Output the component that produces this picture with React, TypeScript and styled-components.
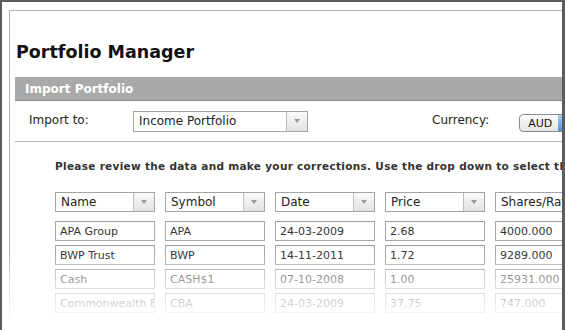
import React from "react";
import styled, { createGlobalStyle } from "styled-components";

const GlobalStyle = createGlobalStyle`
  html, body {
    margin: 0;
    padding: 0;
    background: #fff;
  }
  body {
    font-family: "DejaVu Sans", Verdana, sans-serif;
  }
`;

const Screen = styled.div`
  position: relative;
  width: 565px;
  height: 330px;
  overflow: hidden;
  box-sizing: border-box;
  border-top: 2px solid #5c5c5c;
  border-left: 2px solid #5c5c5c;
  border-right: 3px solid #5c5c5c;
  background: #fff;
`;

const Window = styled.div`
  margin: 8px 0 0 7px;
  height: 400px;
  border-top: 1px solid #b4b4b4;
  border-left: 1px solid #b4b4b4;
  padding-left: 5px;
  display: flex;
  flex-direction: column;
`;

const Title = styled.h1`
  margin: 30px 0 0 1px;
  font-size: 17.5px;
  line-height: 22px;
  font-weight: bold;
  color: #111;
`;

const SectionBar = styled.div`
  margin-top: 14px;
  height: 23px;
  background: #a9a9a9;
  border-bottom: 1px solid #8a8a8a;
  display: flex;
  align-items: center;
  padding-left: 10px;
  color: #fff;
  font-size: 12px;
  font-weight: bold;
`;

const ImportRow = styled.div`
  height: 40px;
  display: flex;
  align-items: center;
  border-bottom: 1px solid #b8b8b8;
  padding-left: 14px;
  font-size: 12px;
  color: #222;
`;

const Label = styled.span<{ $width?: number }>`
  width: ${({ $width }) => ($width ? `${$width}px` : "auto")};
  flex-shrink: 0;
  margin-top: -2px;
`;

const Select = styled.div<{ $width: number; $height: number; $size: number }>`
  display: flex;
  flex-shrink: 0;
  box-sizing: border-box;
  width: ${({ $width }) => $width}px;
  height: ${({ $height }) => $height}px;
  border: 1px solid #a4a4a4;
  background: #fff;
  font-size: ${({ $size }) => $size}px;
  color: #222;
`;

const SelectText = styled.div`
  flex: 1;
  display: flex;
  align-items: center;
  padding-left: 5px;
  white-space: nowrap;
  overflow: hidden;
`;

const SelectArrow = styled.div`
  width: 20px;
  flex-shrink: 0;
  border-left: 1px solid #bdbdbd;
  background: linear-gradient(#fafafa, #e2e2e2);
  display: flex;
  align-items: center;
  justify-content: center;

  &::after {
    content: "";
    border-left: 3px solid transparent;
    border-right: 3px solid transparent;
    border-top: 4px solid #9a9a9a;
  }
`;

const Currency = styled.div`
  margin-left: 124px;
  display: flex;
  align-items: center;
`;

const PopUp = styled.div`
  margin-left: 30px;
  margin-top: 4px;
  display: flex;
  height: 18px;
  box-sizing: border-box;
  border: 1px solid #8c8c8c;
  border-radius: 4px;
  background: linear-gradient(#fdfdfd, #e4e4e4);
  font-size: 11px;
  overflow: hidden;
  flex-shrink: 0;
`;

const PopUpText = styled.div`
  padding: 0 6px 0 8px;
  display: flex;
  align-items: center;
  color: #111;
`;

const PopUpArrow = styled.div`
  width: 14px;
  background: linear-gradient(#a9cdf5, #4f8fdc);
`;

const Review = styled.div`
  padding: 0 0 0 40px;
  display: flex;
  flex-direction: column;
`;

const Instructions = styled.p`
  margin: 18px 0 0;
  font-size: 10.5px;
  font-weight: bold;
  color: #333;
  white-space: nowrap;
  letter-spacing: 0.3px;
`;

const Grid = styled.div`
  margin-top: 20px;
  display: grid;
  grid-template-columns: repeat(5, 100px);
  column-gap: 10px;
  row-gap: 4px;
`;

const HeaderRow = styled.div`
  display: contents;

  & > div {
    margin-bottom: 5px;
  }
`;

const Cell = styled.div`
  box-sizing: border-box;
  height: 20px;
  border: 1px solid #a8a8a8;
  border-top-color: #9a9a9a;
  background: #fff;
  font-size: 11px;
  color: #333;
  padding-left: 4px;
  display: flex;
  align-items: center;
  white-space: nowrap;
  overflow: hidden;
`;

const Fade = styled.div`
  position: absolute;
  left: 0;
  right: 0;
  top: 252px;
  bottom: 0;
  background: linear-gradient(
    rgba(255, 255, 255, 0) 0px,
    rgba(255, 255, 255, 0.55) 28px,
    rgba(255, 255, 255, 0.8) 52px,
    #fff 70px
  );
  pointer-events: none;
`;

const headers = ["Name", "Symbol", "Date", "Price", "Shares/Rate"];

const rows = [
  ["APA Group", "APA", "24-03-2009", "2.68", "4000.000"],
  ["BWP Trust", "BWP", "14-11-2011", "1.72", "9289.000"],
  ["Cash", "CASH$1", "07-10-2008", "1.00", "25931.000"],
  ["Commonwealth Bank", "CBA", "24-03-2009", "37.75", "747.000"],
];

const App: React.FC = () => {
  return (
    <>
      <GlobalStyle />
      <Screen>
        <Window>
          <Title>Portfolio Manager</Title>
          <SectionBar>Import Portfolio</SectionBar>
          <ImportRow>
            <Label $width={104}>Import to:</Label>
            <Select $width={175} $height={21} $size={12}>
              <SelectText>Income Portfolio</SelectText>
              <SelectArrow />
            </Select>
            <Currency>
              <Label>Currency:</Label>
              <PopUp>
                <PopUpText>AUD</PopUpText>
                <PopUpArrow />
              </PopUp>
            </Currency>
          </ImportRow>
          <Review>
            <Instructions>
              Please review the data and make your corrections. Use the drop
              down to select the
            </Instructions>
            <Grid>
              <HeaderRow>
                {headers.map((h) => (
                  <Select key={h} $width={100} $height={20} $size={12}>
                    <SelectText>{h}</SelectText>
                    <SelectArrow />
                  </Select>
                ))}
              </HeaderRow>
              {rows.map((row) =>
                row.map((value, i) => <Cell key={row[0] + i}>{value}</Cell>)
              )}
            </Grid>
          </Review>
        </Window>
        <Fade />
      </Screen>
    </>
  );
};

export default App;
